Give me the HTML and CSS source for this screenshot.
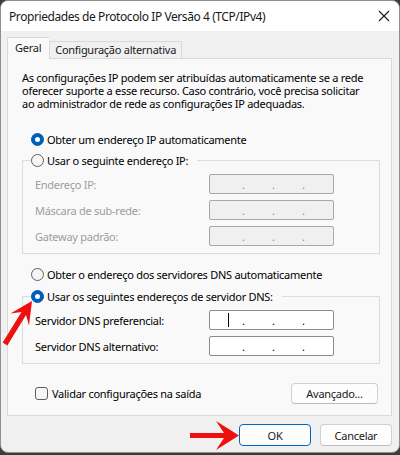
FILE: index.html
```html
<!DOCTYPE html>
<html lang="pt-BR">
<head>
    <meta charset="UTF-8">
    <title>Propriedades de Protocolo IP Versão 4 (TCP/IPv4)</title>
    <link rel="stylesheet" href="styles.css">
</head>
<body>

<div class="window">
    <div class="titlebar">
        <span class="title">Propriedades de Protocolo IP Versão 4 (TCP/IPv4)</span>
        <svg class="close" width="12" height="12" viewBox="0 0 12 12">
            <path d="M1 1 L11 11 M11 1 L1 11" stroke="#1a1a1a" stroke-width="1.1" fill="none"/>
        </svg>
    </div>

    <div class="dialog">
        <div class="tabs">
            <div class="tab active">Geral</div>
            <div class="tab">Configuração alternativa</div>
        </div>

        <div class="panel">
            <p class="intro">As configurações IP podem ser atribuídas automaticamente se a rede oferecer suporte a esse recurso. Caso contrário, você precisa solicitar ao administrador de rede as configurações IP adequadas.</p>

            <div class="option first">
                <span class="radio checked"></span>Obter um endereço IP automaticamente
            </div>

            <fieldset class="group disabled">
                <legend><span class="radio"></span>Usar o seguinte endereço IP:</legend>
                <div class="field-row">
                    <span class="field-label">Endereço IP:</span>
                    <span class="ip-box"><i>.</i><i>.</i><i>.</i></span>
                </div>
                <div class="field-row">
                    <span class="field-label">Máscara de sub-rede:</span>
                    <span class="ip-box"><i>.</i><i>.</i><i>.</i></span>
                </div>
                <div class="field-row">
                    <span class="field-label">Gateway padrão:</span>
                    <span class="ip-box"><i>.</i><i>.</i><i>.</i></span>
                </div>
            </fieldset>

            <div class="option second">
                <span class="radio"></span>Obter o endereço dos servidores DNS automaticamente
            </div>

            <fieldset class="group dns">
                <legend><span class="radio checked"></span>Usar os seguintes endereços de servidor DNS:</legend>
                <div class="field-row">
                    <span class="field-label">Servidor DNS preferencial:</span>
                    <span class="ip-box"><b class="caret"></b><i>.</i><i>.</i><i>.</i></span>
                </div>
                <div class="field-row">
                    <span class="field-label">Servidor DNS alternativo:</span>
                    <span class="ip-box"><i>.</i><i>.</i><i>.</i></span>
                </div>
            </fieldset>

            <div class="bottom-row">
                <label class="check"><span class="checkbox"></span>Validar configurações na saída</label>
                <button type="button" class="btn advanced">Avançado...</button>
            </div>
        </div>

        <div class="actions">
            <button type="button" class="btn ok">OK</button>
            <button type="button" class="btn">Cancelar</button>
        </div>
    </div>

    <!-- red arrows drawn over the dialog -->
    <svg class="marks" width="400" height="455" viewBox="0 0 400 455">
        <polygon fill="#f00f0f" points="32,301 29,325.5 26,315 7.3,345.5 2.7,342.5 21.5,312 10.5,313.5"/>
        <polygon fill="#f00f0f" points="190,433 224,433 216,421 239,435.5 216,450 224,438 190,438"/>
    </svg>
</div>

</body>
</html>
```

FILE: styles.css
```css
html {
    background: #3c3c3c;
}
body {
    margin: 0;
    font-family: "Noto Sans", sans-serif;
    font-size: 11px;
    letter-spacing: -0.27px;
    color: #000;
}
.window {
    position: relative;
    width: 398px;
    height: 451px;
    border: 1px solid #8f8f8f;
    border-radius: 8px;
    background: #f0f0f0;
    overflow: hidden;
}
.titlebar {
    height: 30px;
    background: #fff;
    display: flex;
    align-items: center;
    justify-content: space-between;
    padding: 0 9px 0 8px;
}
.title {
    font-size: 12px;
    letter-spacing: -0.42px;
    color: #1a1a1a;
}
.close {
    margin-top: -1px;
}
.dialog {
    padding: 7px 7px 0 6px;
}
.tabs {
    display: flex;
    align-items: flex-end;
    height: 20px;
    position: relative;
    z-index: 1;
}
.tab {
    height: 16px;
    line-height: 16px;
    padding: 0 5px 0 5px;
    border: 1px solid #d9d9d9;
    border-bottom: none;
    background: #f0f0f0;
    color: #1a1a1a;
}
.tab.active {
    height: 21px;
    line-height: 20px;
    margin-bottom: -1px;
    padding: 0 8px 0 7px;
    background: #f9f9f9;
    border-right: none;
}
.panel {
    height: 344px;
    border: 1px solid #d9d9d9;
    background: #f9f9f9;
    padding: 12px 11px 0 14px;
}
.intro {
    margin: 0;
    line-height: 13px;
    width: 350px;
}
.option {
    display: flex;
    align-items: center;
    height: 16px;
    margin-left: 9px;
}
.option.first {
    margin-top: 21px;
}
.option.second {
    margin-top: 12px;
}
.radio {
    width: 11px;
    height: 11px;
    border: 1px solid #5f5f5f;
    border-radius: 50%;
    background: #f6f6f6;
    margin-right: 3px;
    position: relative;
    flex: none;
}
.radio.checked {
    border-color: #005fb8;
    background: #005fb8;
}
.radio.checked::after {
    content: "";
    position: absolute;
    left: 3px;
    top: 3px;
    width: 5px;
    height: 5px;
    border-radius: 50%;
    background: #fff;
}
.group {
    margin: 5px 0 0 0;
    padding: 0 0 7px 8px;
    border: 1px solid #dcdcdc;
    min-inline-size: 0;
}
.group.dns {
    margin-top: 6px;
}
.group legend {
    display: flex;
    align-items: center;
    height: 16px;
    padding: 0 9px 0 0;
}
.field-row {
    display: grid;
    grid-template-columns: 178px 125px;
    align-items: center;
    margin-top: 6px;
}
.field-label {
    padding-left: 4px;
}
.ip-box {
    box-sizing: border-box;
    height: 20px;
    border: 1px solid #8c8c8c;
    border-radius: 2px;
    background: #fff;
    display: flex;
    align-items: center;
    padding-left: 32px;
    position: relative;
}
.ip-box i {
    font-style: normal;
    width: 30px;
}
.caret {
    position: absolute;
    left: 18px;
    top: 2px;
    width: 1px;
    height: 14px;
    background: #000;
}
.group.disabled .field-row {
    color: #9d9d9d;
}
.group.disabled .ip-box {
    background: #f0f0f0;
    border-color: #a8a8a8;
    color: #8a8a8a;
}
.bottom-row {
    display: flex;
    align-items: center;
    justify-content: space-between;
    margin-top: 19px;
    padding-right: 2px;
}
.check {
    display: flex;
    align-items: center;
    margin-left: 13px;
}
.checkbox {
    width: 11px;
    height: 11px;
    border: 1px solid #5f5f5f;
    border-radius: 3px;
    background: #f6f6f6;
    margin-right: 4px;
}
.btn {
    font-family: "Noto Sans", sans-serif;
    font-size: 11px;
    letter-spacing: -0.27px;
    color: #1a1a1a;
    height: 21px;
    padding: 0;
    border: 1px solid #d0d0d0;
    border-bottom-color: #bdbdbd;
    border-radius: 4px;
    background: #fdfdfd;
}
.advanced {
    width: 87px;
}
.actions {
    display: flex;
    justify-content: flex-end;
    gap: 9px;
    margin-top: 8px;
}
.actions .btn {
    width: 72px;
    height: 22px;
}
.btn.ok {
    border: 1px solid #0067c0;
}
.marks {
    position: absolute;
    left: -1px;
    top: -1px;
    pointer-events: none;
}
```
